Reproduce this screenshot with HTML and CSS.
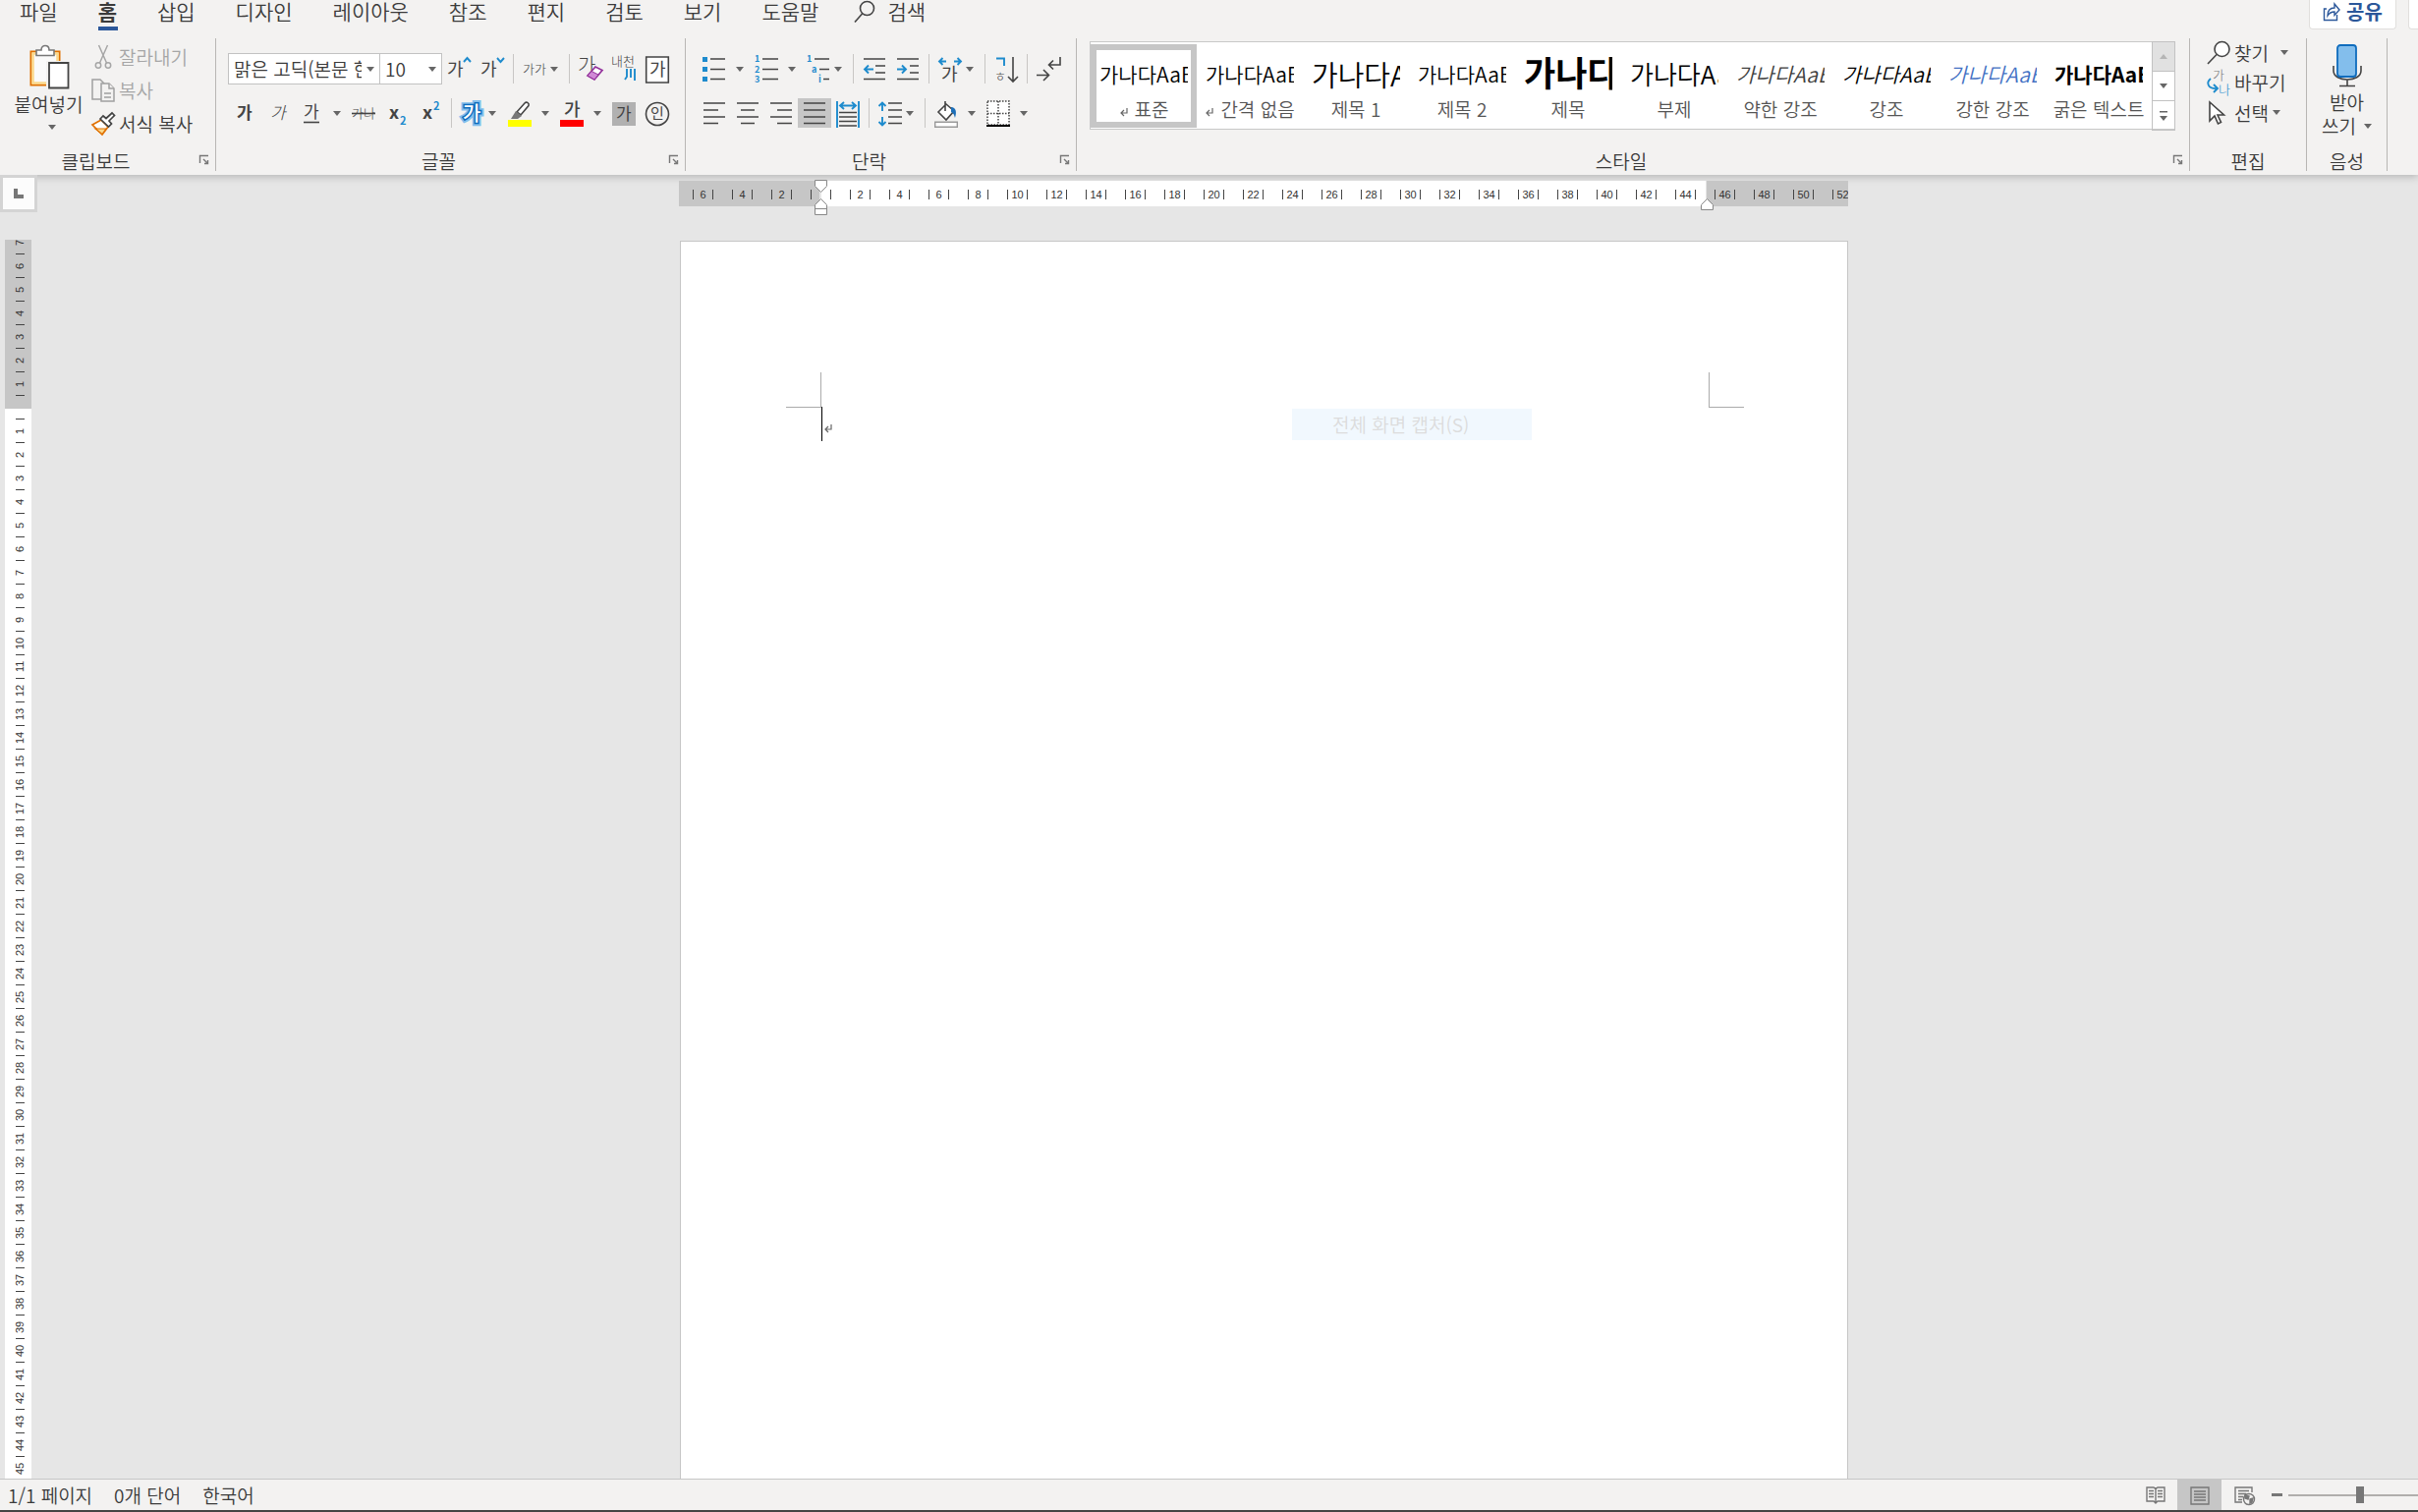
FILE: index.html
```html
<!DOCTYPE html>
<html lang="ko">
<head>
<meta charset="utf-8">
<title>문서 편집기</title>
<link rel="stylesheet" href="styles.css">
</head>
<body>
<header class="ribbon">
  <nav class="tabs" aria-label="리본 탭">
    <button class="tab">파일</button>
    <button class="tab active">홈</button>
    <button class="tab">삽입</button>
    <button class="tab">디자인</button>
    <button class="tab">레이아웃</button>
    <button class="tab">참조</button>
    <button class="tab">편지</button>
    <button class="tab">검토</button>
    <button class="tab">보기</button>
    <button class="tab">도움말</button>
    <button class="tab search">
      <svg width="22" height="24" viewBox="0 0 22 24" class="line"><circle cx="13.500" cy="8.500" r="7"/><path d="M8.500 14L1 22.500"/></svg>
      검색
    </button>
    <button class="share">
      <svg width="18" height="20" viewBox="0 0 18 20" fill="none" stroke="#2b579a" stroke-width="1.400"><path d="M4 7H1.500v11.500h13V13"/><path d="M5 14c0-5 2-8 7-8V2l5 6-5 5.500V10c-4 0-5.500 1.500-7 4z"/></svg>
      공유
    </button>
    <button class="share comments" aria-label="메모"></button>
  </nav>

  <div class="groups">
    <section class="group clipboard">
      <div class="body">
        <button class="big">
          <svg width="42" height="46" viewBox="0 0 42 46"><path d="M2.500 7.500h29v34h-29z" fill="#fafafa" stroke="#e07000" stroke-width="2"/><path d="M4.500 9.500h25v30h-25z" fill="none" stroke="#fbd98c" stroke-width="2.500"/><path d="M8 11.500V6h5c0-6 8-6 8 0h5v5.500z" fill="#fff" stroke="#777" stroke-width="1.600"/><path d="M18 17h24v29H18z" fill="#f3f2f1"/><path d="M21 19h19.500v25.500H21z" fill="#fff" stroke="#444" stroke-width="1.800"/></svg>
          <span>붙여넣기</span>
          <svg class="arrow" viewBox="0 0 8 5"><path d="M0 0h8L4 5z"/></svg>
        </button>
        <div class="stack">
          <button class="small" disabled>
            <svg width="24" height="24" viewBox="0 0 24 24" fill="none" stroke="#a6a6a6" stroke-width="1.500"><path d="M7.500 0l8 18M16.500 0L8.500 18"/><circle cx="7" cy="20.500" r="2.700"/><circle cx="17" cy="20.500" r="2.700"/></svg>잘라내기</button>
          <button class="small" disabled>
            <svg width="24" height="24" viewBox="0 0 24 24" fill="#f3f2f1" stroke="#a0a0a0" stroke-width="1.500"><path d="M1 1h8l4 4v16H1z"/><path d="M10 5h8l5 5v13H10z"/><path d="M18 5v5h5M13 15h7M13 19h7"/></svg>복사</button>
          <button class="small">
            <svg width="24" height="24" viewBox="0 0 24 24"><path d="M1 13l9-5 7 7-6 8z" fill="#fff" stroke="#e07000" stroke-width="1.700"/><path d="M4 17l11 0-4 5.500z" fill="#fbd98c" stroke="#e07000" stroke-width="1.200"/><path d="M9 7l3-3 3 2.500L21 1l2.500 2.500L18 9l2.500 3-3 3z" fill="#fff" stroke="#444" stroke-width="1.700"/></svg>서식 복사</button>
        </div>
      </div>
      <footer><h2>클립보드</h2><button class="launch" aria-label="클립보드 옵션"><svg viewBox="0 0 10 10"><path d="M.5 8V.5H9M4 4l4 4M8.500 5v3.500H5"/></svg></button></footer>
    </section>

    <section class="group font">
      <div class="body rows">
        <div class="row">
          <span class="combo family"><select aria-label="글꼴"><option>맑은 고딕(본문 한글)</option></select><svg class="arrow" viewBox="0 0 8 5"><path d="M0 0h8L4 5z"/></svg></span>
          <span class="combo size"><select aria-label="글꼴 크기"><option>10</option></select><svg class="arrow" viewBox="0 0 8 5"><path d="M0 0h8L4 5z"/></svg></span>
          <button class="btn"><svg class="ico" viewBox="0 0 24 24"><text x="0" y="19" class="t18">가</text><path class="blue" d="M17 5l3.500-4L24 5"/></svg></button>
          <button class="btn"><svg class="ico" viewBox="0 0 24 24"><text x="0" y="19" class="t18">가</text><path class="blue" d="M17 1l3.500 4L24 1"/></svg></button>
          <i class="sep"></i>
          <button class="btn tight"><svg class="ico" viewBox="0 0 24 24"><text x="0" y="17" class="t13">가가</text></svg><svg class="arrow" viewBox="0 0 8 5"><path d="M0 0h8L4 5z"/></svg></button>
          <i class="sep"></i>
          <button class="btn"><svg class="ico" viewBox="0 0 24 24"><text x="-1" y="16" class="t20 thin">가</text><path d="M9 19l8-9 7 3.500-8 9.500z" fill="#fff" stroke="#93319b" stroke-width="1.700"/><path d="M9 19l4-4.500 7 3.500-4 5z" fill="#d08ad6" stroke="#93319b"/></svg></button>
          <button class="btn"><svg class="ico" viewBox="0 0 24 24"><text x="-1" y="9" class="t13">내천</text><path class="blue" d="M15 12v8l-2 3M19 12v9M23 12v12"/></svg></button>
          <button class="btn"><svg class="ico" viewBox="0 0 24 24"><path d="M.7 0h22.600v26H.7z" fill="#fff" class="line"/><text x="4" y="19" class="t18">가</text></svg></button>
        </div>
        <div class="row">
          <button class="btn"><svg class="ico" viewBox="0 0 24 24"><text x="4" y="18" class="t17 heavy">가</text></svg></button>
          <button class="btn"><svg class="ico" viewBox="0 0 24 24"><text x="4" y="18" class="t17 slant">가</text></svg></button>
          <button class="btn split"><svg class="ico" viewBox="0 0 24 24"><text x="4" y="17" class="t17">가</text><path d="M4 21.500h16" class="line"/></svg><svg class="arrow" viewBox="0 0 8 5"><path d="M0 0h8L4 5z"/></svg></button>
          <button class="btn"><svg class="ico" viewBox="0 0 24 24"><text x="0" y="17" class="t13">가나</text><path d="M0 12.500h24" class="line"/></svg></button>
          <button class="btn"><svg class="ico" viewBox="0 0 24 24"><text x="4" y="18" class="t18 heavy">x</text><text x="15" y="24" class="t11 heavy bluet">2</text></svg></button>
          <button class="btn"><svg class="ico" viewBox="0 0 24 24"><text x="4" y="18" class="t18 heavy">x</text><text x="15" y="9" class="t11 heavy bluet">2</text></svg></button>
          <i class="sep"></i>
          <button class="btn tight"><svg class="ico" viewBox="0 0 24 24"><text x="2" y="20" class="t20 glow">가</text><text x="2" y="20" class="t20 rim">가</text></svg><svg class="arrow" viewBox="0 0 8 5"><path d="M0 0h8L4 5z"/></svg></button>
          <button class="btn split"><svg class="ico" viewBox="0 0 24 24"><path d="M9 11L17 2c2-2 5 0 4 2.500L13 14z" fill="#fff" class="line"/><path d="M8 10l6 5-4 3H3z" fill="#777"/><path d="M0 19h24v7H0z" fill="#ff0"/></svg><svg class="arrow" viewBox="0 0 8 5"><path d="M0 0h8L4 5z"/></svg></button>
          <button class="btn split"><svg class="ico" viewBox="0 0 24 24"><text x="4" y="15" class="t18 mid">가</text><path d="M0 19h24v7H0z" fill="#f00"/></svg><svg class="arrow" viewBox="0 0 8 5"><path d="M0 0h8L4 5z"/></svg></button>
          <button class="btn"><svg class="ico" viewBox="0 0 24 24"><path d="M0 1h24v24H0z" fill="#b1b1b1"/><text x="4" y="19" class="t17">가</text></svg></button>
          <button class="btn"><svg class="ico" viewBox="0 0 24 24"><circle cx="12" cy="13" r="11.500" class="line"/><text x="5" y="18" class="t15">인</text></svg></button>
        </div>
      </div>
      <footer><h2>글꼴</h2><button class="launch" aria-label="글꼴 옵션"><svg viewBox="0 0 10 10"><path d="M.5 8V.5H9M4 4l4 4M8.500 5v3.500H5"/></svg></button></footer>
    </section>

    <section class="group para">
      <div class="body rows">
        <div class="row">
          <button class="btn split"><svg class="ico" viewBox="0 0 24 24"><path d="M0 0h5v5H0zM0 10h5v5H0zM0 20h5v5H0z" fill="#1e8bcd"/><path class="line" d="M8 2h15M8 12.500h15M8 22.500h15"/></svg><svg class="arrow" viewBox="0 0 8 5"><path d="M0 0h8L4 5z"/></svg></button>
          <button class="btn split"><svg class="ico" viewBox="0 0 24 24"><text x="0" y="5" class="t9 heavy bluet">1</text><text x="0" y="16" class="t9 heavy bluet">2</text><text x="0" y="26" class="t9 heavy bluet">3</text><path class="line" d="M8 2h16M8 12.500h16M8 22.500h16"/></svg><svg class="arrow" viewBox="0 0 8 5"><path d="M0 0h8L4 5z"/></svg></button>
          <button class="btn tight"><svg class="ico" viewBox="0 0 24 24"><text x="0" y="5" class="t9 heavy bluet">1</text><text x="5" y="16" class="t9 heavy bluet">a</text><text x="12" y="26" class="t9 heavy bluet">i</text><path class="line" d="M8 2h15M13 12.500h10M17 22.500h6"/></svg><svg class="arrow" viewBox="0 0 8 5"><path d="M0 0h8L4 5z"/></svg></button>
          <i class="sep"></i>
          <button class="btn"><svg class="ico" viewBox="0 0 24 24"><path class="line" d="M1 2h22M13 9h10M13 16h10M1 22.500h22"/><path class="blue" d="M11 12.500H2M6 8.500l-4 4 4 4"/></svg></button>
          <button class="btn"><svg class="ico" viewBox="0 0 24 24"><path class="line" d="M1 2h22M14 9h9M14 16h9M1 22.500h22"/><path class="blue" d="M1 12.500h9M6 8.500l4 4-4 4"/></svg></button>
          <i class="sep"></i>
          <button class="btn tight"><svg class="ico" viewBox="0 0 24 24"><path class="blue" d="M8 4.500H1M4.500 1L1 4.500 4.500 8M16 4.500h7M19.500 1L23 4.500 19.500 8"/><text x="3" y="24" class="t18">가</text></svg><svg class="arrow" viewBox="0 0 8 5"><path d="M0 0h8L4 5z"/></svg></button>
          <i class="sep"></i>
          <button class="btn"><svg class="ico" viewBox="0 0 24 24"><path class="blue" d="M2 1.500h8V9"/><text x="0" y="24" class="t13">ㅎ</text><path class="line" d="M19 0v25M14 20l5 5 5-5"/></svg></button>
          <i class="sep"></i>
          <button class="btn"><svg class="ico" viewBox="0 0 24 24"><path class="line" d="M24 0v8H13M17 3.500L12.500 8l4.500 4.500M0 18.500h12M7 13l5.500 5.500L7 24"/></svg></button>
        </div>
        <div class="row">
          <button class="btn"><svg class="ico" viewBox="0 0 24 24"><path class="line" d="M1 2h22M1 9h15M1 16h22M1 22.500h15"/></svg></button>
          <button class="btn"><svg class="ico" viewBox="0 0 24 24"><path class="line" d="M1 2h22M5 9h14M1 16h22M5 22.500h14"/></svg></button>
          <button class="btn"><svg class="ico" viewBox="0 0 24 24"><path class="line" d="M1 2h22M8 9h15M1 16h22M8 22.500h15"/></svg></button>
          <button class="btn on"><svg class="ico" viewBox="0 0 24 24"><path class="line" d="M1 2h22M1 9h22M1 16h22M1 22.500h22"/></svg></button>
          <button class="btn"><svg class="ico" viewBox="0 0 24 24"><path class="line" d="M3 11.500h18M3 16h18M3 20.500h18M3 25h18"/><path class="blue" d="M1 0v27M23 0v27M4 4.500h16M8 1L4 4.500 8 8M16 1l4 3.500L16 8"/></svg></button>
          <i class="sep"></i>
          <button class="btn tight"><svg class="ico" viewBox="0 0 24 24"><path class="line" d="M10 2h14M10 9h14M10 16h14M10 22.500h14"/><path class="blue" d="M4 1v9M.5 5L4 1.500 7.500 5M4 16v9M.5 21L4 24.500 7.500 21"/></svg><svg class="arrow" viewBox="0 0 8 5"><path d="M0 0h8L4 5z"/></svg></button>
          <i class="sep"></i>
          <button class="btn split"><svg class="ico" viewBox="0 0 24 24"><path d="M12 3l8 7-8 9-8-8zM11 0v10" fill="#fff" class="line"/><path d="M17 6c5 0 6 5 4 11-1-4-2-5-4-6z" fill="#1d6fb8"/><path d="M.7 21.200h22.600v5H.7z" fill="#fff" stroke="#999" stroke-width="1.400"/></svg><svg class="arrow" viewBox="0 0 8 5"><path d="M0 0h8L4 5z"/></svg></button>
          <button class="btn split"><svg class="ico" viewBox="0 0 24 24"><path d="M1 0h22v24H1zM12 0v24M1 12.500h22" fill="#fff" stroke="#444" stroke-width="1.500" stroke-dasharray="1.500 1.500"/><path d="M0 25h24" stroke="#000" stroke-width="2"/></svg><svg class="arrow" viewBox="0 0 8 5"><path d="M0 0h8L4 5z"/></svg></button>
        </div>
      </div>
      <footer><h2>단락</h2><button class="launch" aria-label="단락 옵션"><svg viewBox="0 0 10 10"><path d="M.5 8V.5H9M4 4l4 4M8.500 5v3.500H5"/></svg></button></footer>
    </section>

    <section class="group styles">
      <div class="body">
        <div class="gallery">
          <button class="style chosen"><span class="sample">가나다AaB</span><span class="name"><svg class="ret" viewBox="0 0 9 9"><path d="M8 0v5H2M5 2L2 5l3 3"/></svg>표준</span></button>
          <button class="style"><span class="sample">가나다AaB</span><span class="name"><svg class="ret" viewBox="0 0 9 9"><path d="M8 0v5H2M5 2L2 5l3 3"/></svg>간격 없음</span></button>
          <button class="style"><span class="sample h1">가나다A</span><span class="name">제목 1</span></button>
          <button class="style"><span class="sample">가나다AaB</span><span class="name">제목 2</span></button>
          <button class="style"><span class="sample title">가나다</span><span class="name">제목</span></button>
          <button class="style"><span class="sample sub">가나다Aa</span><span class="name">부제</span></button>
          <button class="style"><span class="sample em faint">가나다AaB</span><span class="name">약한 강조</span></button>
          <button class="style"><span class="sample em">가나다AaB</span><span class="name">강조</span></button>
          <button class="style"><span class="sample em strong">가나다AaB</span><span class="name">강한 강조</span></button>
          <button class="style"><span class="sample bold">가나다AaB</span><span class="name">굵은 텍스트</span></button>
          <div class="scroll">
            <button disabled aria-label="위로"><svg class="arrow" viewBox="0 0 8 5"><path d="M0 5h8L4 0z"/></svg></button>
            <button aria-label="아래로"><svg class="arrow" viewBox="0 0 8 5"><path d="M0 0h8L4 5z"/></svg></button>
            <button aria-label="자세히"><svg class="arrow more" viewBox="0 0 8 10"><path d="M0 0h8v1.500H0zM0 5h8l-4 5z"/></svg></button>
          </div>
        </div>
      </div>
      <footer><h2>스타일</h2><button class="launch" aria-label="스타일 옵션"><svg viewBox="0 0 10 10"><path d="M.5 8V.5H9M4 4l4 4M8.500 5v3.500H5"/></svg></button></footer>
    </section>

    <section class="group edit">
      <div class="body">
        <div class="stack">
          <button class="small"><svg width="24" height="24" viewBox="0 0 24 24" class="line"><circle cx="15.500" cy="8" r="7.500" fill="#fff"/><path d="M10 13.500L1 23"/></svg>찾기<svg class="arrow far" viewBox="0 0 8 5"><path d="M0 0h8L4 5z"/></svg></button>
          <button class="small"><svg class="ico" viewBox="0 0 24 24"><text x="6" y="9" class="t13 grey">가</text><text x="12" y="24" class="t13 bluet">나</text><path class="blue" d="M4 8c-5 4-3 11 7 10M7 14l4 4-4 4"/></svg>바꾸기</button>
          <button class="small"><svg width="24" height="24" viewBox="0 0 24 24" class="line"><path d="M3 1v19l5-5 3.500 8 3-1.500L11 14h6.500z" fill="#fff"/></svg>선택<svg class="arrow" viewBox="0 0 8 5"><path d="M0 0h8L4 5z"/></svg></button>
        </div>
      </div>
      <footer><h2>편집</h2></footer>
    </section>

    <section class="group voice">
      <div class="body">
        <button class="big">
          <svg width="30" height="44" viewBox="0 0 30 44"><path d="M1 22v5c0 12 28 12 28 0v-5M15 36v6M7 42.500h16" class="line"/><rect x="5" y="1" width="19" height="32" rx="3" fill="#83beec" stroke="#0f6cbd" stroke-width="1.800"/></svg>
          <span>받아</span>
          <span class="pick">쓰기<svg class="arrow" viewBox="0 0 8 5"><path d="M0 0h8L4 5z"/></svg></span>
        </button>
      </div>
      <footer><h2>음성</h2></footer>
    </section>
  </div>
</header>

<main class="work">
  <aside class="side">
    <button class="tabstop" aria-label="왼쪽 탭"><svg width="10" height="10" viewBox="0 0 10 10"><path d="M0 0h4v6h6v4H0z" fill="#777"/></svg></button>
    <div class="vruler"><div class="above" id="above"></div><div class="below" id="below"></div></div>
  </aside>
  <div class="canvas">
    <div class="hwrap">
      <div class="hruler" id="hruler"></div>
      <svg class="mark first" width="13" height="36" viewBox="0 0 13 36"><path d="M.5.5h12v6l-6 6-6-6zM6.500 19.500l6 6v10H.5v-10zM.5 29.500h12"/></svg>
      <svg class="mark right" width="13" height="36" viewBox="0 0 13 36"><path d="M6.500 19.500l6 6v5H.5v-5z"/></svg>
    </div>
    <article class="page">
      <i class="crop tl"></i><i class="crop tr"></i>
      <p class="line-one"><i class="caret"></i><svg class="ret" viewBox="0 0 9 9"><path d="M8 0v5H2M5 2L2 5l3 3"/></svg></p>
      <div class="ghost">전체 화면 캡처(S)</div>
    </article>
  </div>
</main>

<footer class="status">
  <button>1/1 페이지</button>
  <button>0개 단어</button>
  <button>한국어</button>
  <div class="views">
    <button class="view" aria-label="읽기 모드"><svg width="20" height="20" viewBox="0 0 20 20"><path d="M1 2h7l2 1.500L12 2h7v14h-7l-2 2-2-2H1zM10 2v17M3 5.500h5M3 8.500h5M3 11.500h5M12 5.500h5M12 8.500h5M12 11.500h5"/></svg></button>
    <button class="view on" aria-label="인쇄 모양"><svg width="20" height="20" viewBox="0 0 20 20"><path d="M1 2h18v17H1zM4 6h12M4 9h12M4 12h12M4 15h12"/></svg></button>
    <button class="view" aria-label="웹 모양"><svg width="20" height="20" viewBox="0 0 20 20"><path d="M8 17H1V2h17v5M4 5.500h11M4 8.500h8M4 11.500h5M4 14.500h4"/><circle cx="15" cy="14" r="5.500" fill="#f3f2f1"/><path d="M11 10l4 1-1 3-3-1zM16 14l3-1-1 4-2 1z" fill="#777"/></svg></button>
    <button class="minus" aria-label="축소"></button>
    <input class="zoom" type="range" min="0" max="100" value="56" aria-label="확대/축소">
  </div>
</footer>
<script src="script.js"></script>
</body>
</html>
```
FILE: styles.css
```css
* { box-sizing: border-box; }
body {
  margin: 0;
  height: 100vh;
  display: flex;
  flex-direction: column;
  overflow: hidden;
  background: #e6e6e6;
  color: #3b3b3b;
  font: 350 19px/24px "Noto Sans CJK KR", "Noto Sans", sans-serif;
  border-bottom: 2px solid #444;
}
button, select {
  font: inherit;
  color: inherit;
  background: none;
  border: 0;
  padding: 0;
  margin: 0;
  white-space: nowrap;
}
h2 { margin: 0; font: inherit; }
svg { overflow: visible; flex: none; }
.line { stroke: #444; stroke-width: 1.600; }
svg.line, path.line:not([fill]), circle.line { fill: none; }
.blue { stroke: #1e8bcd; stroke-width: 1.900; fill: none; }
.arrow { width: 8px; height: 5px; fill: #666; }
.ico { width: 24px; height: 24px; fill: #444; }
.ico text { fill: #444; font-weight: 400; }
.ico .t9 { font-size: 9px; }
.ico .t11 { font-size: 11px; }
.ico .t13 { font-size: 13px; font-weight: 300; }
.ico .t15 { font-size: 15px; }
.ico .t17 { font-size: 17px; }
.ico .t18 { font-size: 18px; }
.ico .t20 { font-size: 20px; }
.ico .heavy { font-weight: 700; }
.ico .mid { font-weight: 500; }
.ico .thin { font-weight: 300; }
.ico .slant { font-style: italic; font-weight: 300; }
.ico .bluet { fill: #1e8bcd; }
.ico .grey { fill: #777; }
.ico .glow { fill: none; stroke: #83beec; stroke-width: 7; }
.ico .rim { fill: #fff; stroke: #0f6cbd; stroke-width: 3; paint-order: stroke; font-weight: 500; }

/* Ribbon */
.ribbon {
  background: #f3f2f1;
  flex: none;
  box-shadow: 0 2px 8px rgba(0, 0, 0, .22);
  position: relative;
}
.tabs { display: flex; height: 39px; font-size: 21px; align-items: flex-start; }
.tab { padding: 0 21px 0 20px; height: 31px; line-height: 22px; position: relative; display: flex; }
.tab.active { font-weight: 700; }
.tab.active::after {
  content: "";
  position: absolute;
  left: 20px;
  right: 20px;
  bottom: 0;
  height: 4px;
  background: #2b579a;
}
.search { gap: 12px; padding-left: 15px; }
.share {
  display: flex;
  align-items: center;
  justify-content: center;
  gap: 6px;
  width: 89px;
  height: 30px;
  padding-bottom: 6px;
  margin-left: auto;
  color: #2b579a;
  font-size: 20px;
  font-weight: 700;
  background: #fff;
  border: 1px solid #e1dfdd;
  border-top: 0;
  border-radius: 0 0 4px 4px;
}
.comments { width: 10px; margin-left: 12px; border-right: 0; border-radius: 0 0 0 4px; }
.groups { display: flex; height: 139px; padding-bottom: 4px; }
.group { border-right: 1px solid #b8b6b4; display: flex; flex-direction: column; }
.body { flex: 1; display: flex; }
.group footer { display: flex; height: 24px; align-items: center; margin-bottom: -2px; }
.group h2 { flex: 1; text-align: center; }
.launch { width: 24px; height: 12px; display: flex; padding-left: 8px; }
.launch svg { width: 10px; height: 10px; fill: none; stroke: #777; stroke-width: 1.400; }
.clipboard { width: 220px; }
.font { width: 478px; padding-left: 12px; }
.font footer { margin-left: -12px; }
.para { width: 398px; padding-left: 12px; }
.para footer { margin-left: -12px; }
.styles { flex: 1; min-width: 0; padding-left: 13px; }
.styles footer { margin-left: -13px; }
.edit { width: 119px; }
.voice { width: 82px; margin-right: 31px; }
.big {
  display: flex;
  flex-direction: column;
  align-items: center;
  padding-top: 6px;
}
.big > svg:first-child { margin-bottom: 3px; }
.big > .arrow { margin: 9px 0 0 6px; }
.pick { display: flex; align-items: center; gap: 8px; }
.clipboard .big { width: 71px; margin: 0 8px 0 14px; }
.voice .big { width: 100%; }
.stack { display: flex; flex-direction: column; }
.small { display: flex; align-items: center; height: 34px; gap: 4px; }
.clipboard .stack { padding-top: 2px; }
.small:disabled { color: #a6a6a6; }
.edit .stack { padding-left: 17px; }
.edit .small { height: 31px; }
.edit .small:first-child { height: 29px; }
.edit .far { margin-left: 8px; }

.rows { flex-direction: column; gap: 15px; padding-top: 16px; }
.row { display: flex; height: 30px; align-items: center; }
.btn { width: 34px; height: 30px; padding-left: 5px; display: flex; align-items: center; flex: none; }
.btn.split { width: 53px; }
.btn.split .arrow { margin-left: 10px; }
.btn.tight { width: 48px; }
.btn.tight .arrow { margin-left: 4px; }
.btn.on { background: #c6c6c6; }
.sep { width: 1px; height: 30px; margin: 0 4px; background: #c8c6c4; flex: none; }
.combo {
  position: relative;
  height: 32px;
  background: #fff;
  border: 1px solid #c2c2c2;
  display: flex;
  align-items: center;
}
.combo select { appearance: none; padding: 0 18px 0 5px; width: 100%; height: 30px; text-overflow: clip; overflow: hidden; }
.combo .arrow { position: absolute; right: 5px; }
.family { width: 155px; }
.size { width: 64px; margin-left: -1px; }

.gallery { display: flex; height: 90px; margin-top: 3px; background: #fff; border: 1px solid #c8c8c8; }
.style {
  width: 108px;
  display: flex;
  flex-direction: column;
  padding: 12px 9px 0;
  margin: 2px 0 1px;
  flex: none;
}
.chosen { outline: 6px solid #c6c6c6; outline-offset: -6px; }
.sample {
  display: flex;
  align-items: center;
  height: 36px;
  width: 90px;
  overflow: hidden;
  color: #000;
  font-size: 21px;
}
.name { color: #555; align-self: center; white-space: nowrap; height: 24px; margin-top: 6px; }
.ret { width: 9px; height: 9px; margin-right: 7px; fill: none; stroke: #666; stroke-width: 1.200; }
.h1 { font-size: 29px; }
.sub { font-size: 26px; }
.title { font-size: 35px; line-height: 30px; padding-bottom: 5px; font-weight: 700; }
.bold { font-weight: 700; }
.em { font-style: italic; }
.faint { color: #404040; }
.strong { color: #4472c4; }
.scroll { width: 24px; display: flex; flex-direction: column; margin: -1px -1px -2px auto; border: 1px solid #c2c2c2; }
.scroll button { flex: 1; display: flex; align-items: center; justify-content: center; }
.scroll button + button { border-top: 1px solid #c2c2c2; }
.scroll button:disabled { background: #e1e1e1; }
.scroll button:disabled .arrow { fill: #b5b5b5; }
.scroll .more { height: 10px; }

/* Document area */
.work { flex: 1; display: flex; min-height: 0; }
.side { width: 38px; display: flex; flex-direction: column; }
.tabstop {
  flex: none;
  width: 38px;
  height: 38px;
  border: 3px solid #d4d4d4;
  background: #fcfcfc;
  display: flex;
  align-items: center;
  justify-content: center;
  position: relative;
}
.vruler {
  flex: 1;
  min-height: 0;
  overflow: hidden;
  width: 27px;
  margin: 28px 0 0 5px;
  background: #fff;
  color: #333;
  font: 400 11px/12px "Liberation Sans", Arial, sans-serif;
}
.above {
  height: 172px;
  padding: 0 0 13px 3px;
  background: #c6c6c6;
  display: flex;
  flex-direction: column;
  justify-content: flex-end;
  overflow: hidden;
}
.below { padding: 10px 0 0 3px; }
.vcell { height: 24px; flex: none; display: flex; flex-direction: column; align-items: center; }
.vcell span {
  flex: 1;
  writing-mode: vertical-rl;
  transform: rotate(180deg);
  text-align: center;
}
.vcell::before { content: ""; width: 9px; height: 1px; background: #444; }
.above .vcell { flex-direction: column-reverse; }
.canvas { flex: 1; display: flex; flex-direction: column; align-items: center; padding: 6px 0 0 73px; }
.hwrap { position: relative; width: 1190px; flex: none; }
.hruler {
  height: 26px;
  padding-left: 4px;
  display: flex;
  align-items: center;
  overflow: hidden;
  color: #333;
  background: linear-gradient(90deg, #c6c6c6 143px, #e6e6e6 143px 145px, #fff 145px 1045px, #e6e6e6 1045px 1046px, #c6c6c6 1046px);
  font: 400 11px/10px "Liberation Sans", Arial, sans-serif;
}
.hcell {
  flex: none;
  width: 21px;
  height: 10px;
  margin: 2px 9px 0 10px;
  border: solid #444;
  border-width: 0 1px;
  text-align: center;
}
.mark { position: absolute; top: -1px; fill: #fff; stroke: #888; }
.mark.first { left: 138px; }
.mark.right { left: 1040px; }
.page {
  flex: 1;
  width: 1189px;
  margin: 35px 0 0 1px;
  padding: 168px 143px 0;
  background: #fff;
  border: 1px solid #c6c6c6;
  border-bottom: 0;
  position: relative;
}
.crop { position: absolute; top: 133px; width: 36px; height: 36px; border: solid #ababab; }
.tl { left: 107px; border-width: 0 1px 1px 0; }
.tr { right: 105px; border-width: 0 0 1px 1px; }
.line-one { margin: 0; height: 35px; display: flex; align-items: center; gap: 1px; }
.caret { width: 1px; height: 35px; background: #000; }
.line-one .ret { margin-top: 9px; }
.ghost {
  position: absolute;
  left: 622px;
  top: 170px;
  width: 244px;
  height: 32px;
  padding-left: 41px;
  line-height: 32px;
  background: #f1f8fe;
  color: #dcdcdc;
}

/* Status bar */
.status {
  flex: none;
  height: 32px;
  display: flex;
  align-items: center;
  gap: 22px;
  padding-left: 8px;
  background: #f3f2f1;
  border-top: 1px solid #c6c6c6;
}
.views { display: flex; align-items: center; margin-left: auto; align-self: stretch; }
.view { width: 45px; align-self: stretch; display: flex; align-items: center; justify-content: center; }
.view svg { fill: none; stroke: #777; stroke-width: 1.400; }
.view.on { background: #c6c6c6; }
.minus { width: 11px; height: 3px; background: #777; margin: 0 6px; }
.zoom { appearance: none; width: 132px; height: 20px; margin: 0; background: linear-gradient(#b0aeac, #b0aeac) center / 100% 2px no-repeat; }
.zoom::-webkit-slider-thumb { appearance: none; width: 8px; height: 17px; background: #777; }
```
FILE: script.js
```js
// Fills the rulers with their numbered ticks.
function addCell(parent, cls, label) {
  const cell = document.createElement("div");
  cell.className = cls;
  const text = document.createElement("span");
  text.textContent = label;
  cell.append(text);
  parent.append(cell);
}

const hruler = document.getElementById("hruler");
for (let n = -6; n <= 52; n += 2) {
  addCell(hruler, "hcell", n === 0 ? "" : Math.abs(n));
}
const above = document.getElementById("above");
for (let n = 7; n >= 1; n--) addCell(above, "vcell", n);
const below = document.getElementById("below");
for (let n = 1; n <= 60; n++) addCell(below, "vcell", n);
```
